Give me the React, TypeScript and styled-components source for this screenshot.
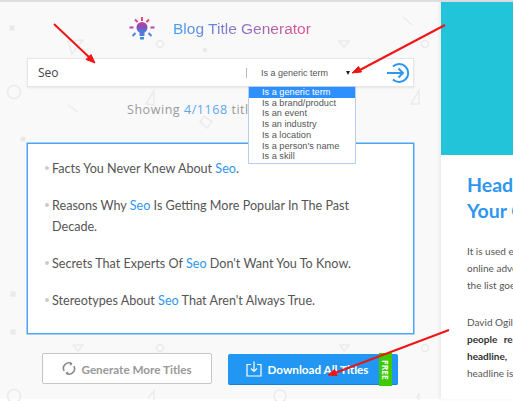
import { createGlobalStyle, styled } from "styled-components";

const GlobalStyle = createGlobalStyle`
  html, body {
    margin: 0;
    padding: 0;
    background: #fff;
  }
`;

const titles = [
  ["Facts You Never Knew About ", "Seo", "."],
  ["Reasons Why ", "Seo", " Is Getting More Popular In The Past Decade."],
  ["Secrets That Experts Of ", "Seo", " Don't Want You To Know."],
  ["Stereotypes About ", "Seo", " That Aren't Always True."],
];

const options = [
  "Is a generic term",
  "Is a brand/product",
  "Is an event",
  "Is an industry",
  "Is a location",
  "Is a person's name",
  "Is a skill",
];

function Pattern() {
  return (
    <PatternSvg width="441" height="401" viewBox="0 0 441 401" fill="none" stroke="#ebebeb" strokeWidth="1.5">
      <rect x="10" y="26" width="4" height="4" fill="#e8e8e8" />
      <path d="M72 54 L83 40 L68 41 Z" />
      <circle cx="160" cy="44" r="3.5" />
      <circle cx="205" cy="50" r="1.5" fill="#e8e8e8" />
      <circle cx="14" cy="92" r="6.5" />
      <path d="M68 105 L78 112" />
      <path d="M146 104 L154 91 L154 105 Z" />
      <path d="M204 116 L212 122 L207 128 L200 122 Z" />
      <path d="M403 17 L412 25" />
      <path d="M339 41 L349 41 L344 47 Z" />
      <circle cx="425" cy="44" r="3.5" />
      <path d="M411 104 L419 90 L419 104 Z" />
      <circle cx="23" cy="139" r="2" fill="#e8e8e8" />
      <rect x="11" y="292" width="4" height="4" fill="#e8e8e8" />
      <rect x="11" y="330" width="4" height="4" fill="#e8e8e8" />
      <path d="M73 345 L83 345 L78 351 Z" />
      <circle cx="160" cy="348" r="3.5" />
      <circle cx="14" cy="396" r="6.5" />
      <path d="M148 398 L154 391 L154 400" />
      <path d="M340 345 L349 345 L344 351 Z" />
      <circle cx="425" cy="348" r="3.5" />
      <circle cx="280" cy="396" r="6" />
      <path d="M417 398 L419 393 L419 400" />
    </PatternSvg>
  );
}

function BulbIcon() {
  return (
    <svg width="28" height="28" viewBox="0 0 28 28" fill="none">
      <defs>
        <linearGradient id="bulbFill" x1="0" y1="0" x2="0" y2="1">
          <stop offset="0" stopColor="#d0359a" />
          <stop offset="0.55" stopColor="#7d55bd" />
          <stop offset="1" stopColor="#2b93f0" />
        </linearGradient>
      </defs>
      <circle cx="14" cy="12.5" r="5.5" fill="url(#bulbFill)" />
      <path d="M11.5 17h5v4h-5z" fill="#5f78d8" />
      <path d="M12 22h4v2.5h-4z" fill="#2b93f0" />
      <g strokeWidth="2" strokeLinecap="butt">
        <path d="M14 2v4" stroke="#e04a82" />
        <path d="M7 4.5l2.6 2.6" stroke="#dc3f90" />
        <path d="M21 4.5l-2.6 2.6" stroke="#e0407a" />
        <path d="M1.5 12.5h4" stroke="#b04ab0" />
        <path d="M22.5 12.5h4" stroke="#b04ab0" />
        <path d="M4.5 21l3-3" stroke="#4f80e0" />
        <path d="M23.5 21l-3-3" stroke="#4f80e0" />
      </g>
    </svg>
  );
}

function GoIcon() {
  return (
    <svg width="26" height="22" viewBox="0 0 26 22" fill="none" stroke="#2f96ef" strokeWidth="2">
      <path d="M7 4.5A9 9 0 1 1 7 17.5" />
      <path d="M1 11h16" />
      <path d="M12.5 6.5L17 11l-4.500 4.500" />
    </svg>
  );
}

function RefreshIcon() {
  return (
    <svg width="14" height="15" viewBox="0 0 14 15" fill="none" stroke="#8a8a8a" strokeWidth="1.6">
      <path d="M2.200 9.800A5.200 5.200 0 0 1 9.800 3" />
      <path d="M11.800 5.200A5.200 5.200 0 0 1 4.200 12" />
      <path d="M8.500 0.800L10.300 3.300 7.600 4.700" fill="#8a8a8a" stroke="none" />
      <path d="M5.500 14.200L3.700 11.700 6.400 10.300" fill="#8a8a8a" stroke="none" />
    </svg>
  );
}

function DownloadIcon() {
  return (
    <svg width="16" height="16" viewBox="0 0 16 16" fill="none" stroke="#fff" strokeWidth="1.2">
      <path d="M5 3.500H1v11.500h14V3.500h-4" />
      <path d="M8 0.500v9.500" />
      <path d="M5 7.500L8 10.500 11 7.500" />
    </svg>
  );
}

function Arrows() {
  return (
    <ArrowSvg width="513" height="401" viewBox="0 0 513 401">
      <g stroke="#f01414" strokeWidth="2" fill="#f01414">
        <path d="M54 24L90 58" />
        <path d="M95 63L86 59.500 91 54.500Z" strokeWidth="1" />
        <path d="M445 25L358 71" />
        <path d="M352 73L358.500 66.500 361.500 72Z" strokeWidth="1" />
        <path d="M449 330L335 373" />
        <path d="M328 375L334.500 369.500 337 375.500Z" strokeWidth="1" />
      </g>
    </ArrowSvg>
  );
}

export default function App() {
  return (
    <>
      <GlobalStyle />
      <Page>
        <TopStrip />
        <Columns>
          <Main>
            <Pattern />
            <Brand>
              <BulbIcon />
              <BrandName>Blog Title Generator</BrandName>
            </Brand>
            <SearchBar>
              <Keyword>Seo</Keyword>
              <Separator />
              <SelectBox>
                <span>Is a generic term</span>
                <Caret />
              </SelectBox>
              <GoButton>
                <GoIcon />
              </GoButton>
              <OptionList>
                {options.map((option, id) => (
                  <OptionRow key={`option_${id}`} $active={id === 0}>
                    {option}
                  </OptionRow>
                ))}
              </OptionList>
            </SearchBar>
            <Counter>
              Showing <CounterValue>4/1168</CounterValue> titles
            </Counter>
            <TitleCard>
              {titles.map((title, id) => (
                <TitleRow key={`title_${id}`}>
                  {title[0]}
                  <Highlight>{title[1]}</Highlight>
                  {title[2]}
                </TitleRow>
              ))}
            </TitleCard>
            <Actions>
              <GhostButton>
                <RefreshIcon />
                Generate More Titles
              </GhostButton>
              <PrimaryButton>
                <DownloadIcon />
                Download All Titles
                <FreeBadge>
                  <FreeLabel>FREE</FreeLabel>
                </FreeBadge>
              </PrimaryButton>
            </Actions>
          </Main>
          <Aside>
            <Banner />
            <Article>
              <Heading>
                <HeadingLine>Headlines</HeadingLine>
                <HeadingLine>Your Content</HeadingLine>
              </Heading>
              <Paragraph>
                <Line>It is used everywhere</Line>
                <Line>online advertising</Line>
                <Line>the list goes on</Line>
              </Paragraph>
              <Paragraph>
                <Line>David Ogilvy</Line>
                <Line><strong>people read the</strong></Line>
                <Line><strong>headline, you</strong></Line>
                <Line>headline is</Line>
              </Paragraph>
            </Article>
          </Aside>
        </Columns>
        <BottomStrip />
        <Arrows />
      </Page>
    </>
  );
}

const Page = styled.div`
  position: relative;
  display: flex;
  flex-direction: column;
  width: 513px;
  height: 401px;
  overflow: hidden;
  background: #fff;
`;

const TopStrip = styled.div`
  flex: none;
  height: 2px;
  background: #dedede;
`;

const BottomStrip = styled.div`
  flex: none;
  height: 2px;
  background: #fff;
`;

const Columns = styled.div`
  flex: 1;
  min-height: 0;
  display: flex;
`;

const Main = styled.main`
  position: relative;
  flex: none;
  box-sizing: border-box;
  width: 441px;
  padding: 0 27px;
  display: flex;
  flex-direction: column;
  background: #f9f9f9;
`;

const PatternSvg = styled.svg`
  position: absolute;
  top: -2px;
  left: 0;
`;

const Brand = styled.div`
  position: relative;
  box-sizing: border-box;
  height: 56px;
  padding-left: 101px;
  padding-bottom: 3px;
  display: flex;
  align-items: center;
  gap: 17px;
`;

const BrandName = styled.h1`
  margin: 0;
  font: 400 15.5px "Liberation Sans", Arial, sans-serif;
  background: linear-gradient(90deg, #3f9df2 0%, #8b72c4 50%, #e0508c 100%);
  -webkit-background-clip: text;
  background-clip: text;
  color: transparent;
`;

const SearchBar = styled.div`
  position: relative;
  box-sizing: border-box;
  width: 387px;
  height: 29px;
  display: flex;
  align-items: center;
  background: #fff;
  border: 1px solid #e6e6e6;
  box-shadow: 0 1px 2px rgba(0, 0, 0, 0.08);
`;

const Keyword = styled.div`
  flex: none;
  width: 208px;
  padding-left: 10px;
  font: 400 12px "Open Sans", sans-serif;
  color: #444;
`;

const Separator = styled.div`
  flex: none;
  width: 1px;
  height: 10px;
  background: #bbb;
`;

const SelectBox = styled.div`
  flex: none;
  box-sizing: border-box;
  width: 107px;
  padding-left: 14px;
  padding-right: 4px;
  display: flex;
  align-items: center;
  justify-content: space-between;
  font: 400 9px "Liberation Sans", Arial, sans-serif;
  color: #555;
`;

const Caret = styled.span`
  width: 0;
  height: 0;
  border-left: 2px solid transparent;
  border-right: 2px solid transparent;
  border-top: 4px solid #222;
`;

const GoButton = styled.div`
  flex: none;
  margin-left: 32px;
  display: flex;
`;

const OptionList = styled.div`
  position: absolute;
  z-index: 2;
  top: 27px;
  left: 220px;
  box-sizing: border-box;
  width: 108px;
  padding-bottom: 1px;
  background: #fff;
  border: 1px solid #b8cdf0;
  font: 400 9.2px/10.7px "Liberation Sans", Arial, sans-serif;
  color: #555;
`;

const OptionRow = styled.div<{ $active: boolean }>`
  padding-left: 13px;
  background: ${(p) => (p.$active ? "#2e8fff" : "transparent")};
  color: ${(p) => (p.$active ? "#fff" : "#555")};
`;

const Counter = styled.div`
  position: relative;
  margin-top: 15px;
  padding-left: 100px;
  font: 400 12.5px/16px "Open Sans", sans-serif;
  letter-spacing: 0.55px;
  color: #999;
`;

const CounterValue = styled.span`
  color: #5ba8ee;
`;

const TitleCard = styled.ul`
  position: relative;
  box-sizing: border-box;
  width: 387px;
  height: 191px;
  margin: 25px 0 0;
  padding: 14px 18px 0 24px;
  list-style: none;
  background: #fff;
  border: 1px solid #4fa3f3;
  box-shadow: 0 0 0 0.5px #4fa3f3;
  font: 400 12.6px/21px Lato, sans-serif;
  color: #555;
`;

const TitleRow = styled.li`
  position: relative;
  margin-bottom: 16px;

  &::before {
    content: "";
    position: absolute;
    left: -7px;
    top: 8px;
    width: 4px;
    height: 4px;
    border-radius: 50%;
    background: #ccc;
  }
`;

const Highlight = styled.span`
  color: #2f96f0;
`;

const Actions = styled.div`
  position: relative;
  margin-top: 19px;
  padding-left: 15px;
  display: flex;
  align-items: flex-start;
  gap: 16px;
`;

const GhostButton = styled.div`
  box-sizing: border-box;
  width: 170px;
  height: 31px;
  display: flex;
  align-items: center;
  justify-content: center;
  gap: 5px;
  background: #fff;
  border: 1px solid #c6c6c6;
  border-radius: 2px;
  font: 700 11.7px Lato, sans-serif;
  color: #999;
`;

const PrimaryButton = styled.div`
  position: relative;
  box-sizing: border-box;
  width: 170px;
  height: 31px;
  margin-top: 1px;
  padding-right: 12px;
  display: flex;
  align-items: center;
  justify-content: center;
  gap: 6px;
  background: #2196f3;
  border-bottom: 1px solid #1b7fd0;
  border-radius: 2px;
  font: 700 11.7px Lato, sans-serif;
  color: #fff;
`;

const FreeBadge = styled.div`
  position: absolute;
  top: -1px;
  right: 6px;
  width: 13px;
  height: 33px;
  display: flex;
  align-items: center;
  justify-content: center;
  background: #3ccb00;
`;

const FreeLabel = styled.span`
  writing-mode: vertical-rl;
  font: 700 8.5px "Open Sans", sans-serif;
  color: #fff;
`;

const Aside = styled.aside`
  position: relative;
  flex: none;
  width: 400px;
  box-shadow: -2px 0 3px rgba(0, 0, 0, 0.06);
  background: #fff;
`;

const Banner = styled.div`
  height: 153px;
  background: #22c4d9;
`;

const Article = styled.article`
  padding: 17px 0 0 26px;
`;

const Heading = styled.h2`
  margin: 0 0 19px;
  font: 700 19.5px/26px Lato, sans-serif;
  color: #2f96f0;
`;

const HeadingLine = styled.div`
  white-space: nowrap;
`;

const Paragraph = styled.p`
  margin: 0 0 20px;
  font: 400 10px/17px Lato, sans-serif;
  color: #555;

  strong {
    color: #333;
    word-spacing: 4px;
  }
`;

const Line = styled.div`
  white-space: nowrap;
`;

const ArrowSvg = styled.svg`
  position: absolute;
  z-index: 3;
  top: 0;
  left: 0;
  pointer-events: none;
`;
